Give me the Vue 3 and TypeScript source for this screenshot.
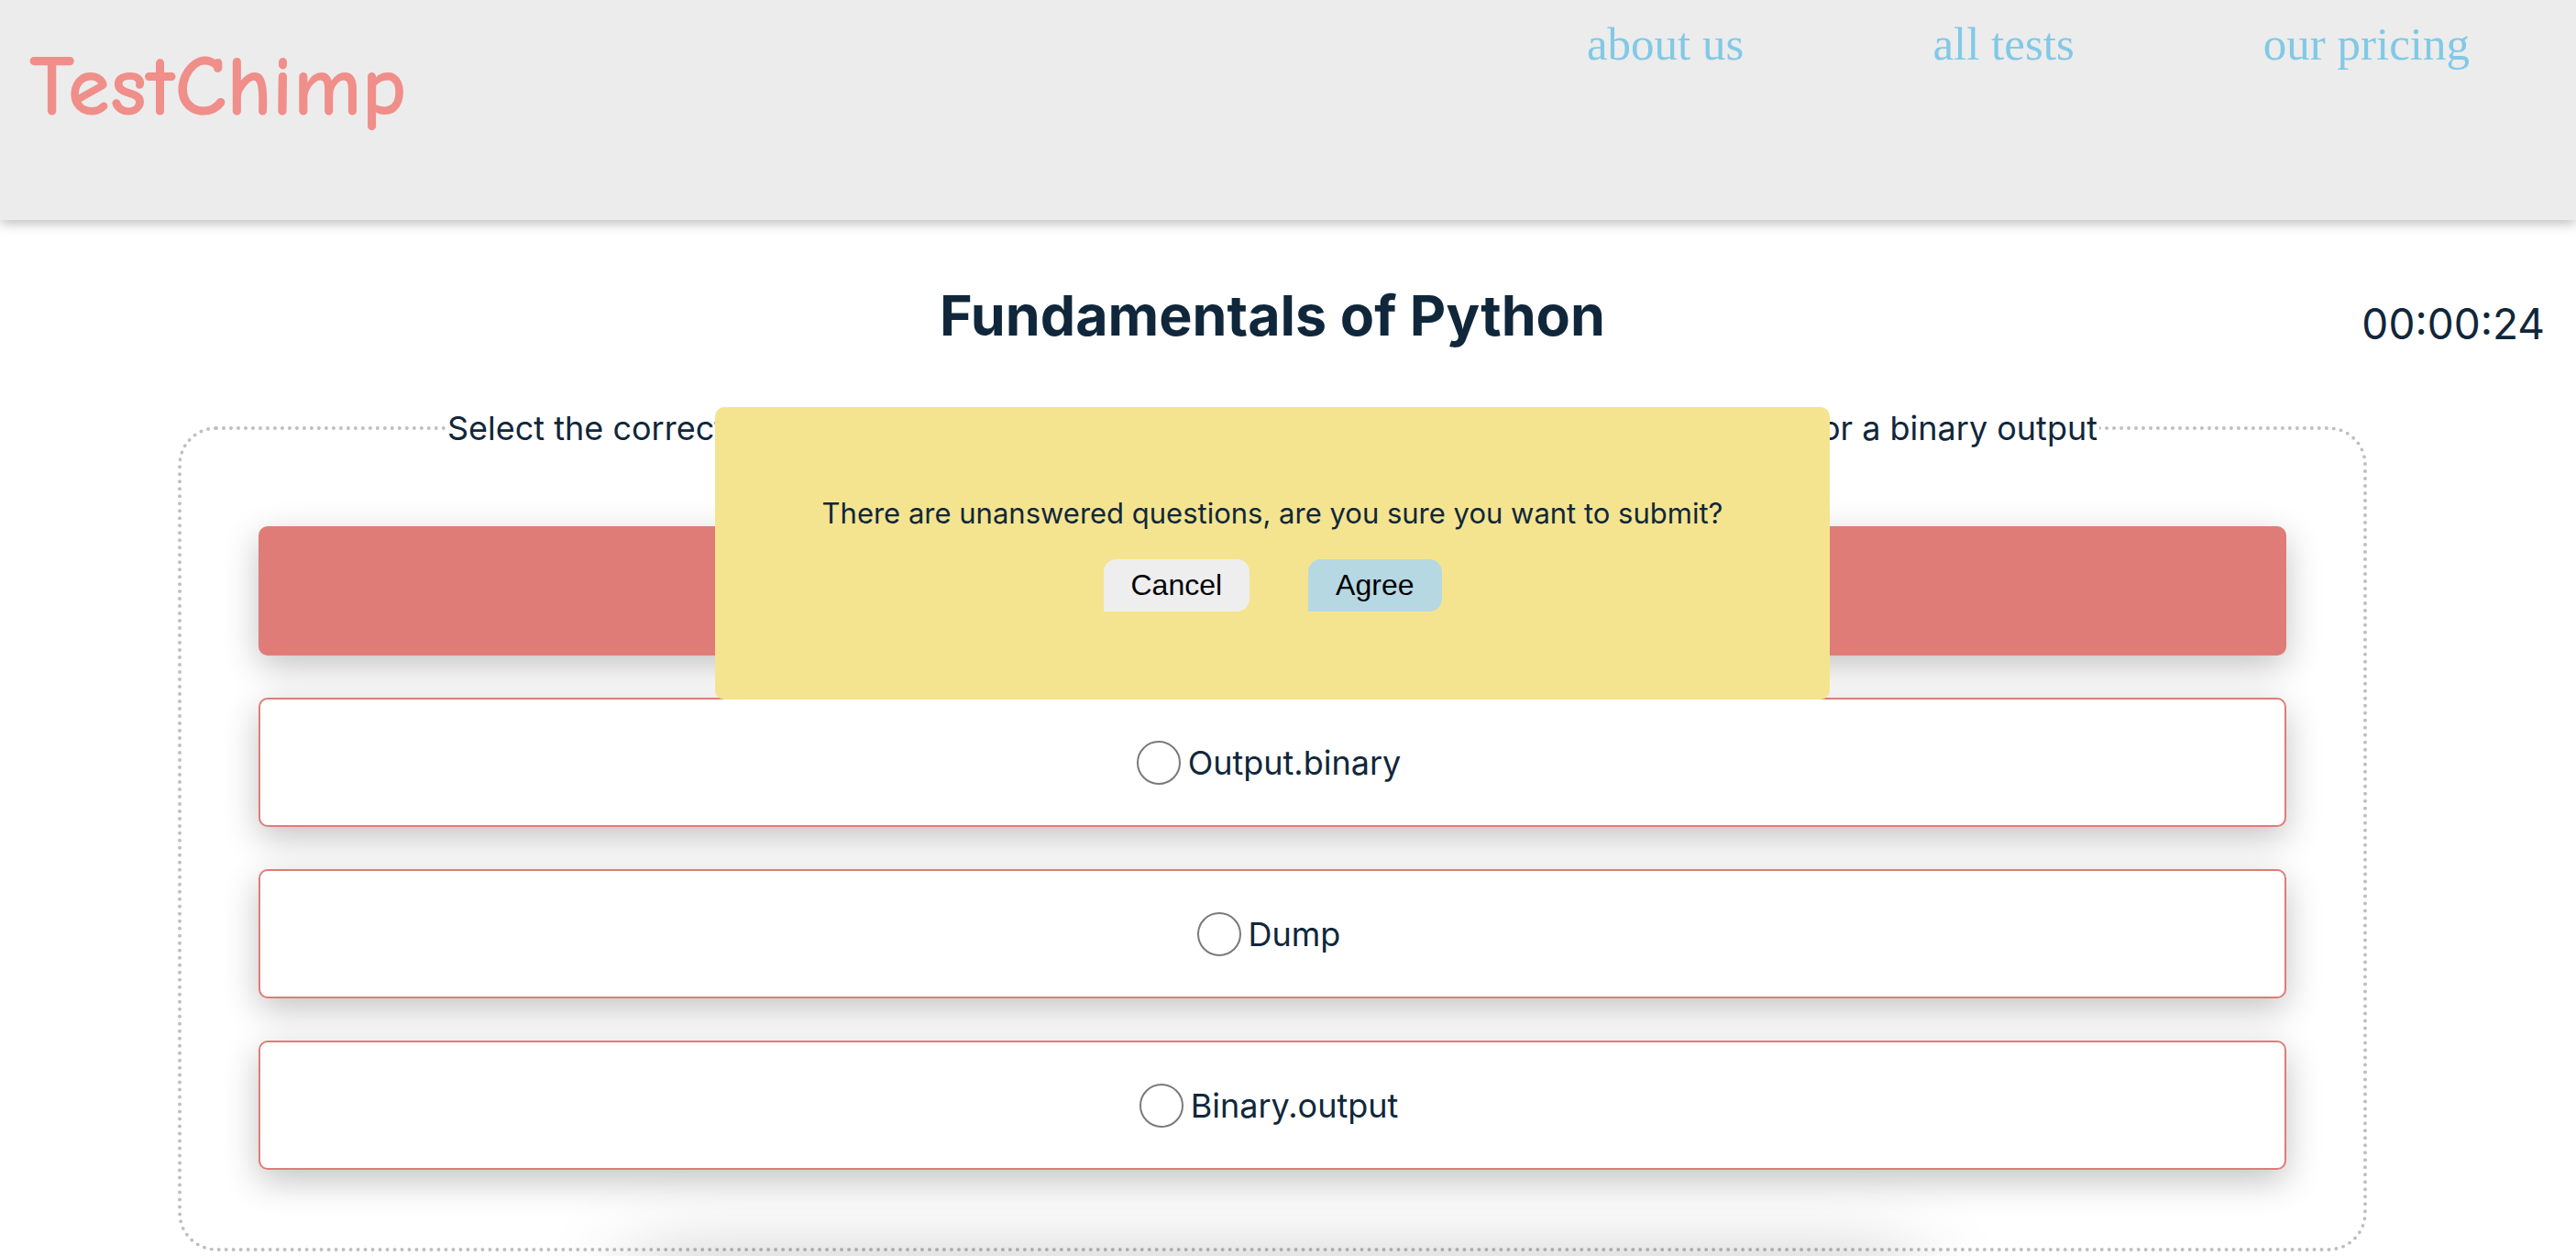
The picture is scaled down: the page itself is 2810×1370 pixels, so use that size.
<script setup lang="ts">
import { ref } from 'vue'

interface NavLink { label: string; href: string }
interface Option { id: string; label: string }

const links: NavLink[] = [
  { label: 'about us', href: '#about' },
  { label: 'all tests', href: '#tests' },
  { label: 'our pricing', href: '#pricing' },
]

const options: Option[] = [
  { id: 'selected', label: '' },
  { id: 'output-binary', label: 'Output.binary' },
  { id: 'dump', label: 'Dump' },
  { id: 'binary-output', label: 'Binary.output' },
]

const answer = ref('selected')
const confirming = ref(true)
</script>

<template>
  <div class="page">
    <header class="header">
      <a class="logo" href="#home">TestChimp</a>
      <nav class="nav">
        <a v-for="link in links" :key="link.href" :href="link.href">{{ link.label }}</a>
      </nav>
    </header>

    <main class="main">
      <div class="heading">
        <h1>Fundamentals of Python</h1>
        <time class="timer">00:00:24</time>
      </div>

      <fieldset class="question">
        <legend><span>Select the correct</span><span>for a binary output</span></legend>
        <label
          v-for="option in options"
          :key="option.id"
          class="option"
          :class="{ selected: answer === option.id }"
        >
          <input v-model="answer" type="radio" name="answer" :value="option.id" />
          <span>{{ option.label }}</span>
        </label>
      </fieldset>

      <div class="footer-card"></div>

      <div v-if="confirming" class="dialog" role="dialog">
        <p>There are unanswered questions, are you sure you want to submit?</p>
        <div class="actions">
          <button type="button" @click="confirming = false">Cancel</button>
          <button type="button" class="agree" @click="confirming = false">Agree</button>
        </div>
      </div>
    </main>
  </div>
</template>

<style>
body {
  margin: 0;
  background: #fff;
}
</style>

<style scoped>
.page {
  min-height: 100vh;
  overflow: hidden;
  box-sizing: border-box;
  color: #10273b;
  font-family: Inter, "Liberation Sans", sans-serif;
}
.header {
  display: flex;
  justify-content: space-between;
  align-items: flex-start;
  box-sizing: border-box;
  height: 240px;
  padding: 18px 116px 0 32px;
  background: #ececec;
  box-shadow: 0 4px 12px rgba(0, 0, 0, 0.25);
}
.logo {
  color: #f08e8a;
  font: 700 94px/154px "Comic Neue", "Comic Sans MS", Lato, cursive;
  text-decoration: none;
}
.nav {
  display: flex;
  gap: 206px;
}
.nav a {
  color: #82c9e6;
  font: 51px/60px "Liberation Serif", serif;
  text-decoration: none;
}
.main {
  position: relative;
  padding-right: 34px;
}
.heading {
  display: grid;
  grid-template-columns: 1fr auto 1fr;
  align-items: center;
  height: 205px;
}
h1 {
  grid-column: 2;
  margin: 0;
  padding-top: 2px;
  font-size: 61px;
  line-height: 80px;
}
.timer {
  justify-self: end;
  padding-top: 20px;
  font-size: 46px;
  line-height: 60px;
}
.question {
  display: flex;
  flex-direction: column;
  gap: 46px;
  margin: 0 194px;
  padding: 85px 84px;
  border: 4px dotted #bfbfbf;
  border-radius: 42px;
}
legend {
  display: flex;
  justify-content: space-between;
  box-sizing: border-box;
  width: calc(100% - 408px);
  margin: 0 auto;
  padding: 0 2px;
  font-size: 36px;
  line-height: 44px;
}
.option {
  display: flex;
  align-items: center;
  justify-content: center;
  gap: 8px;
  box-sizing: border-box;
  height: 141px;
  padding-right: 8px;
  border: 2px solid #df7c77;
  border-radius: 10px;
  background: #fff;
  box-shadow: 0 12px 38px rgba(0, 0, 0, 0.24);
  font-size: 36px;
  line-height: 48px;
}
.option.selected {
  background: #df7c77;
}
.option input {
  appearance: none;
  width: 48px;
  height: 48px;
  margin: 0;
  border: 2px solid #7a7a7a;
  border-radius: 50%;
  background: #fff;
}
.option.selected input {
  border-color: #df7c77;
  background: #df7c77;
}
.footer-card {
  height: 100px;
  margin: 20px 690px 0;
  border-radius: 10px;
  box-shadow: 0 0 100px rgba(0, 0, 0, 0.28);
}
.dialog {
  position: absolute;
  top: 204px;
  left: 780px;
  right: 814px;
  box-sizing: border-box;
  padding: 96px 40px;
  border-radius: 10px;
  background: #f5e48f;
  text-align: center;
}
.dialog p {
  margin: 0 0 30px;
  font-size: 31px;
  line-height: 40px;
}
.actions {
  display: flex;
  justify-content: center;
  gap: 64px;
}
button {
  height: 57px;
  padding: 0 30px 2px;
  border: 0;
  border-radius: 14px 14px 14px 0;
  background: #eee;
  color: #000;
  font: 32px/40px "Liberation Sans", Arial, sans-serif;
}
button.agree {
  background: #b6d8e3;
}
</style>
